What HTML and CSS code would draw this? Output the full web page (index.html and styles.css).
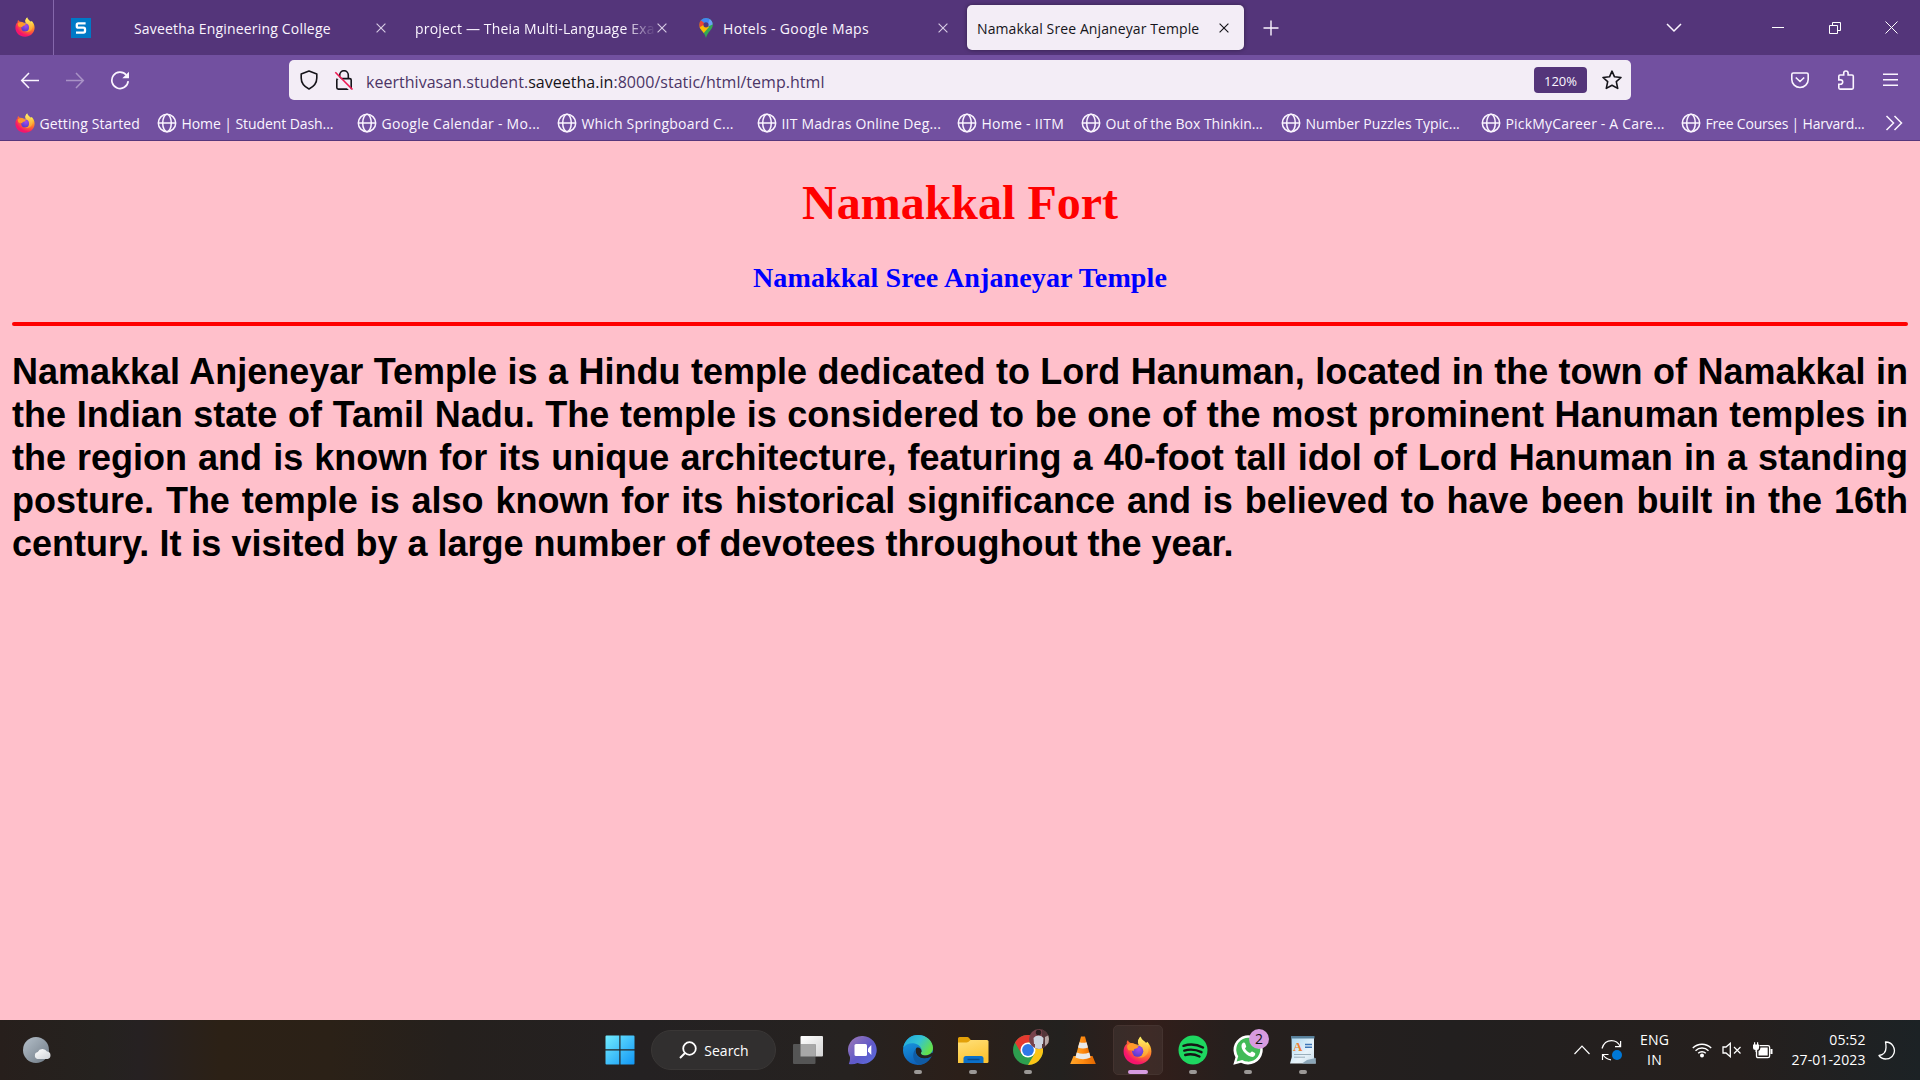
FILE: index.html
```html
<!DOCTYPE html>
<html lang="en">
<head>
<meta charset="utf-8">
<title>Namakkal Sree Anjaneyar Temple</title>
<link rel="stylesheet" href="styles.css">
</head>
<body>
<svg class="defs" width="0" height="0">
  <defs>
    <radialGradient id="ffBody" cx="0.78" cy="0.12" r="1">
      <stop offset="0.1" stop-color="#fff44f"/><stop offset="0.35" stop-color="#ffb02e"/><stop offset="0.6" stop-color="#ff6a30"/><stop offset="0.85" stop-color="#f5156c"/>
    </radialGradient>
    <linearGradient id="ffFlame" x1="0" y1="0" x2="0" y2="1"><stop offset="0" stop-color="#fff26a"/><stop offset="1" stop-color="#ff9a2b"/></linearGradient>
    <radialGradient id="ffGlobe" cx="0.6" cy="0.3" r="0.8"><stop offset="0" stop-color="#a44bf0"/><stop offset="1" stop-color="#4a3ac8"/></radialGradient>
    <linearGradient id="winG" gradientUnits="userSpaceOnUse" x1="0" y1="0" x2="30" y2="30"><stop offset="0" stop-color="#74edff"/><stop offset="1" stop-color="#0f95f5"/></linearGradient>
    <linearGradient id="tvFront" x1="0" y1="0" x2="1" y2="1"><stop offset="0" stop-color="#fff"/><stop offset="1" stop-color="#d4d4d4"/></linearGradient>
    <linearGradient id="teams" x1="0" y1="0" x2="1" y2="1"><stop offset="0" stop-color="#a07ab5"/><stop offset="0.55" stop-color="#5f59c9"/><stop offset="1" stop-color="#5b6fe0"/></linearGradient>
    <linearGradient id="edgeTop" x1="0" y1="0" x2="1" y2="0.5"><stop offset="0" stop-color="#1fa6dc"/><stop offset="0.55" stop-color="#34c3d4"/><stop offset="1" stop-color="#63e04c"/></linearGradient>
    <linearGradient id="edgeLow" x1="0" y1="0" x2="0.4" y2="1"><stop offset="0" stop-color="#1ba4e8"/><stop offset="1" stop-color="#0d5fb8"/></linearGradient>
    <linearGradient id="folder" x1="0" y1="0" x2="0.4" y2="1"><stop offset="0" stop-color="#ffe07a"/><stop offset="1" stop-color="#fcc433"/></linearGradient>
    <linearGradient id="moonG" x1="0" y1="0" x2="1" y2="1"><stop offset="0" stop-color="#b5c0ca"/><stop offset="1" stop-color="#6f7a85"/></linearGradient>
    <linearGradient id="cloudG" x1="0" y1="0" x2="1" y2="1"><stop offset="0" stop-color="#fff"/><stop offset="1" stop-color="#cfd3d8"/></linearGradient>
    <linearGradient id="vlcG" x1="0" y1="0" x2="1" y2="0"><stop offset="0" stop-color="#ffa62b"/><stop offset="0.5" stop-color="#ff8a10"/><stop offset="1" stop-color="#e06600"/></linearGradient>
    <linearGradient id="docG" x1="0" y1="0" x2="1" y2="1"><stop offset="0" stop-color="#a8d8f2"/><stop offset="0.6" stop-color="#e8f3fa"/><stop offset="1" stop-color="#c5dbe8"/></linearGradient>
    <symbol id="firefox" viewBox="0 0 30 30">
      <path fill="url(#ffBody)" d="M4 8C3.500 6.500 4.200 5 5.200 4.500C5.600 6 6.500 6.800 8 7.200C9.600 7 11 7.500 12.300 8.300L17 9.500L15.500 5.200L17.500 1C19.500 4 22 5 23.800 7.200L25.200 6C27.800 9 29.400 12 29.400 16C29.400 23.500 23 29.500 15 29.500C7 29.500 .6 23.500 .6 16C.6 12.500 1.600 10 4 8Z"/>
      <path fill="url(#ffFlame)" d="M18.500 .5C15.600 2.700 14.700 6 16 9C18 9.700 20.500 12 20.500 15.500C20.500 19 18.500 21.500 15.500 22C21 23.500 26 19.500 26.300 14.500C26.600 10 24.500 7.800 21.500 5.500C19.500 4 18.800 2.500 18.500 .5Z"/>
      <circle cx="15.200" cy="15.700" r="5.800" fill="url(#ffGlobe)"/>
      <path fill="#ff9a2b" d="M4.500 9.500C8 6.800 11 7.800 12.800 9.300L16 10.500C15.800 12 14 13 12.500 13.300C11.500 13.500 11 14.500 11 15.700C9 14.500 8 14.500 6 15C4.500 13.500 4 11.500 4.500 9.500Z"/>
    </symbol>
    <symbol id="globe" viewBox="0 0 20 20">
      <g fill="none" stroke="#fbf5ff" stroke-width="1.500"><circle cx="10" cy="10" r="8.700"/><ellipse cx="10" cy="10" rx="4.300" ry="8.700"/><path d="M1.300 10H18.700"/></g>
    </symbol>
    <symbol id="x" viewBox="0 0 10 10"><path d="M.6 .6L9.400 9.400M9.400 .6L.6 9.400" fill="none" stroke="currentColor" stroke-width="1.150"/></symbol>
  </defs>
</svg>

<header class="browser">
  <div class="tabbar">
    <div class="view-button"><svg width="20" height="20"><use href="#firefox"/></svg></div>
    <div class="pinned-tab">
      <svg width="20" height="20" viewBox="0 0 20 20"><rect width="20" height="20" fill="#0079c6"/><path d="M14.600 5.300H7.300Q5.800 5.300 5.800 6.800V8.200Q5.800 9.700 7.300 9.700H12.500Q14 9.700 14 11.200V13Q14 14.600 12.500 14.600H5" fill="none" stroke="#fff" stroke-width="2.300"/></svg>
    </div>
    <div class="tab"><span class="tab-title wide-2">Saveetha Engineering College</span><svg class="close" width="10" height="10"><use href="#x"/></svg></div>
    <div class="tab"><span class="tab-title wide-2 faded">project — Theia Multi-Language Exa</span><svg class="close" width="10" height="10"><use href="#x"/></svg></div>
    <div class="tab">
      <svg class="favicon" width="20" height="20" viewBox="0 0 20 20"><clipPath id="pin"><path d="M10 0A6.800 6.800 0 0 1 16.800 6.800C16.800 12 11.800 13 10 20C8.200 13 3.200 12 3.200 6.800A6.800 6.800 0 0 1 10 0Z"/></clipPath><g clip-path="url(#pin)"><rect width="20" height="20" fill="#34a853"/><path d="M0 0H20V3L10 7Z" fill="#4285f4"/><path d="M14 0H20V5L11 9Z" fill="#6ba1f5"/><path d="M0 0L4 1.500L10 6.500L5 12L0 9Z" fill="#ea4335"/><path d="M9 6L13 9L6 17L2 10.500Z" fill="#fbbc04"/></g><circle cx="10" cy="6.800" r="2.600" fill="#54357a"/></svg>
      <span class="tab-title wide-4">Hotels - Google Maps</span><svg class="close" width="10" height="10"><use href="#x"/></svg></div>
    <div class="tab active"><span class="tab-title wide-1">Namakkal Sree Anjaneyar Temple</span><svg class="close" width="10" height="10"><use href="#x"/></svg></div>
    <svg class="new-tab" width="16" height="16" viewBox="0 0 16 16"><path d="M8 .5V15.500M.5 8H15.500" stroke="#fbf5ff" stroke-width="1.400"/></svg>
    <div class="window-controls">
      <svg width="16" height="10" viewBox="0 0 16 10"><path d="M1 1L8 8L15 1" fill="none" stroke="#fbf5ff" stroke-width="1.500"/></svg>
      <svg class="minimize" width="12" height="12" viewBox="0 0 12 12"><path d="M0 5.500H12" stroke="#fff"/></svg>
      <svg class="restore" width="12" height="12" viewBox="0 0 12 12"><path d="M.5 3.500H8.500V11.500H.5ZM3.500 3.500V.5H11.500V8.500H8.500" fill="none" stroke="#fff"/></svg>
      <svg class="quit" width="13" height="13" viewBox="0 0 13 13"><path d="M.5 .5L12.500 12.500M12.500 .5L.5 12.500" stroke="#fff"/></svg>
    </div>
  </div>

  <div class="navbar">
    <div class="nav-buttons">
      <svg width="20" height="20" viewBox="0 0 20 20"><path d="M19 10.500H2M9 3L1.700 10.500L9 18" fill="none" stroke="#fbf5ff" stroke-width="1.500"/></svg>
      <svg class="dim" width="20" height="20" viewBox="0 0 20 20"><path d="M1 10.500H18M11 3L18.300 10.500L11 18" fill="none" stroke="#fbf5ff" stroke-width="1.500"/></svg>
      <svg width="20" height="20" viewBox="0 0 20 20"><path d="M16.300 5A8.200 8.200 0 1 0 18.200 11.200" fill="none" stroke="#fbf5ff" stroke-width="1.700"/><path d="M19 1.800V8.300H12.300Z" fill="#fbf5ff"/></svg>
    </div>
    <div class="urlbar">
      <svg class="shield" width="20" height="20" viewBox="0 0 20 20"><path d="M10 1L17.800 4V8C17.800 13 15 16.500 10 19C5 16.500 2.200 13 2.200 8V4Z" fill="none" stroke="#15141a" stroke-width="1.600" stroke-linejoin="round"/></svg>
      <svg class="lock" width="20" height="20" viewBox="0 0 20 20"><path d="M5.700 8.600V5A4.300 4.300 0 0 1 14.300 5V8.600M4.300 8.600H15.700Q17.200 8.600 17.200 10.100V17.600Q17.200 19.100 15.700 19.100H4.300Q2.800 19.100 2.800 17.600V10.100Q2.800 8.600 4.300 8.600" fill="none" stroke="#15141a" stroke-width="1.600"/><path d="M0 3.600L16.500 20" stroke="#f3edf6" stroke-width="2.400"/><path d="M1.300 2.300L18.500 19.500" stroke="#ee1850" stroke-width="1.600"/></svg>
      <span class="url">keerthivasan.student.<b>saveetha.in</b>:8000/static/html/temp.html</span>
      <span class="zoom">120%</span>
      <svg class="star" width="20" height="20" viewBox="0 0 20 20"><path d="M10 1.200L12.500 6.800L19 7.500L14.300 11.700L15.700 18.400L10 15.200L4.300 18.400L5.700 11.700L1 7.500L7.500 6.800Z" fill="none" stroke="#15141a" stroke-width="1.600" stroke-linejoin="round"/></svg>
    </div>
    <div class="nav-tools">
      <svg width="20" height="20" viewBox="0 0 20 20"><path d="M3.300 3H16.700Q18.200 3 18.200 4.500V9.500A8.200 8 0 0 1 1.800 9.500V4.500Q1.800 3 3.300 3ZM5.800 7.500L10 11.500L14.200 7.500" fill="none" stroke="#fbf5ff" stroke-width="1.600"/></svg>
      <svg width="20" height="20" viewBox="0 0 20 20"><path d="M2.800 6.200Q2.800 5 4 5H7.700V3.200A2.200 2.200 0 0 1 12.100 3.200V5H16Q17.300 5 17.300 6.300V17.800Q17.300 19.100 16 19.100H4Q2.800 19.100 2.800 17.800V14.300H4.500A2.200 2.200 0 0 0 4.500 9.900H2.800Z" fill="none" stroke="#fbf5ff" stroke-width="1.600"/></svg>
      <svg width="20" height="20" viewBox="0 0 20 20"><path d="M2 4.300H17M2 9.800H17M2 15.300H17" stroke="#fbf5ff" stroke-width="1.400"/></svg>
    </div>
  </div>

  <nav class="bookmarks">
    <a class="first wide-1"><svg width="20" height="20"><use href="#firefox"/></svg>Getting Started</a>
    <a class="narrow-1"><svg width="20" height="20"><use href="#globe"/></svg>Home | Student Dash...</a>
    <a class="wide-3"><svg width="20" height="20"><use href="#globe"/></svg>Google Calendar - Mo...</a>
    <a class="wide-2"><svg width="20" height="20"><use href="#globe"/></svg>Which Springboard C...</a>
    <a class="wide-2"><svg width="20" height="20"><use href="#globe"/></svg>IIT Madras Online Deg...</a>
    <a class="short wide-3"><svg width="20" height="20"><use href="#globe"/></svg>Home - IITM</a>
    <a class="wide-0"><svg width="20" height="20"><use href="#globe"/></svg>Out of the Box Thinkin...</a>
    <a class="wide-0"><svg width="20" height="20"><use href="#globe"/></svg>Number Puzzles Typic...</a>
    <a class="wide-2"><svg width="20" height="20"><use href="#globe"/></svg>PickMyCareer - A Care...</a>
    <a class="narrow-2"><svg width="20" height="20"><use href="#globe"/></svg>Free Courses | Harvard...</a>
    <svg class="more" width="18" height="16" viewBox="0 0 18 16"><path d="M1.500 1L8.500 8L1.500 15M9.500 1L16.500 8L9.500 15" fill="none" stroke="#fbf5ff" stroke-width="1.500"/></svg>
  </nav>
</header>

<main class="page">
  <h1>Namakkal Fort</h1>
  <h3>Namakkal Sree Anjaneyar Temple</h3>
  <hr>
  <p>Namakkal Anjeneyar Temple is a Hindu temple dedicated to Lord Hanuman, located in the town of Namakkal in the Indian state of Tamil Nadu. The temple is considered to be one of the most prominent Hanuman temples in the region and is known for its unique architecture, featuring a 40-foot tall idol of Lord Hanuman in a standing posture. The temple is also known for its historical significance and is believed to have been built in the 16th century. It is visited by a large number of devotees throughout the year.</p>
</main>

<footer class="taskbar">
  <div class="weather"><svg width="30" height="28" viewBox="0 0 30 28"><circle cx="14" cy="14" r="13" fill="url(#moonG)"/><path d="M15.500 23A3.600 3.600 0 0 1 15.800 16A5.200 5.200 0 0 1 25 15.500A3.800 3.800 0 0 1 25.500 23Z" fill="url(#cloudG)"/></svg></div>
  <div class="apps">
    <div class="app"><svg width="30" height="30" viewBox="0 0 30 30"><path fill="url(#winG)" d="M1.500 .5H14.300V14.300H.5V1.500Q.5 .5 1.500 .5ZM15.500 .5H28.500Q29.500 .5 29.500 1.500V14.300H15.500ZM.5 15.500H14.300V29.500H1.500Q.5 29.500 .5 28.500ZM15.500 15.500H29.500V28.500Q29.500 29.500 28.500 29.500H15.500Z"/></svg></div>
    <div class="search"><svg width="18" height="18" viewBox="0 0 18 18"><circle cx="10.500" cy="7.500" r="6.300" fill="none" stroke="#fff" stroke-width="1.800"/><path d="M6 12L1 17" stroke="#fff" stroke-width="1.900"/></svg>Search</div>
    <div class="app"><svg width="30" height="30" viewBox="0 0 30 30"><rect x="7.500" y="1" width="22.500" height="20.500" rx="1" fill="url(#tvFront)"/><rect x="0" y="9" width="22.500" height="20" rx="1" fill="#555"/><rect x="7.500" y="9" width="15" height="12.500" fill="#a8a8a8"/></svg></div>
    <div class="app"><svg width="30" height="30" viewBox="0 0 30 30"><path fill="url(#teams)" d="M15 1A14 14 0 1 1 9.500 28Q5 30 .8 29Q2.300 26 2 22A14 14 0 0 1 15 1Z"/><rect x="6.500" y="9" width="12.500" height="12" rx="1.500" fill="#fff"/><path d="M20 13.500L23.300 10V20L20 16.500Z" fill="#fff"/></svg></div>
    <div class="app running"><svg width="30" height="30" viewBox="0 0 30 30"><circle cx="15" cy="15" r="15" fill="url(#edgeLow)"/><path d="M.3 12.500C2 4.500 8 0 15 0C24 0 30 6.500 30 13C30 18 26 20.500 22 20.500C18.500 20.500 17 19 18 17.500C19.500 15 18 11.500 14.500 9.500C10 7 3.500 8 .3 12.500Z" fill="url(#edgeTop)"/><path d="M18.500 17C17 18.500 18.500 20.500 22 20.500C25 20.500 28 19 29 17.500L31 19L28 22C23 24.500 17 23.500 14.500 20.500C12 17.500 12 14 14 12.500C17 12 19 14.500 18.500 17Z" fill="#25221f"/><path d="M13 13.500C12 17 12.500 21 17 23C21 24.500 25 23.500 28 21.500C26 26 22 29 17 30C10 27 8 19 13 13.500Z" fill="#105ba4"/></svg></div>
    <div class="app running"><svg width="32" height="30" viewBox="0 0 32 30"><path d="M1 3.500Q1 2 2.500 2H10Q11 2 12 3L14 5.500H1Z" fill="#e3a008"/><path d="M1 8.500V5H30Q31.500 5 31.500 6.500V26.500Q31.500 28 30 28H1Z" fill="url(#folder)"/><path d="M1 3.500V7.500H9.500Q11 7.500 13.500 5L11 2.300Z" fill="#e3a008"/><path d="M6.500 28V23.500Q6.500 21 9 21H24Q26.500 21 26.500 23.500V28Z" fill="#0b70c9"/><path d="M10.500 24.500H22.500" stroke="#0a4a89" stroke-width="1.500"/></svg></div>
    <div class="app running">
      <svg width="30" height="30" viewBox="0 0 30 30"><circle cx="15" cy="15" r="15" fill="#2d9e4f"/><path d="M2 7.500A15 15 0 0 1 28 7.500H15L8.500 18.700Z" fill="#e5392f"/><path d="M28 7.500A15 15 0 0 1 15 30L21.500 18.700L15 7.500Z" fill="#fbc417"/><circle cx="15" cy="15" r="7.500" fill="#fff"/><circle cx="15" cy="15" r="5.900" fill="#2f78e8"/></svg>
      <svg class="avatar" width="20" height="20" viewBox="0 0 20 20"><clipPath id="av"><circle cx="10" cy="10" r="10"/></clipPath><g clip-path="url(#av)"><rect width="20" height="20" fill="#78424b"/><path d="M13 0H20V20H13Z" fill="#55363a"/><path d="M16 8L20 6V14L16 17Z" fill="#b9a9a6"/><circle cx="9.500" cy="3.500" r="2.700" fill="#2b1d1e"/><path d="M4.500 9Q6 6.500 9.500 6.500Q13 6.500 14.500 9L14 15H13V20H6V15H5Z" fill="#cdd3de"/></g></svg>
    </div>
    <div class="app"><svg width="30" height="30" viewBox="0 0 30 30"><path d="M5.500 21H24.500L27.800 29H2.200Z" fill="url(#vlcG)"/><path d="M13 1.500H17L23 24Q15 28 7 24Z" fill="url(#vlcG)"/><path d="M11.500 7.200Q15 8.500 18.500 7.200L20 12.500Q15 14.700 10 12.500ZM8.700 17.500Q15 20 21.300 17.500L22.600 22.500Q15 25.800 7.400 22.500Z" fill="#e9e9e9"/></svg></div>
    <div class="app focused"><svg width="29" height="29"><use href="#firefox"/></svg></div>
    <div class="app running"><svg width="30" height="30" viewBox="0 0 30 30"><circle cx="15" cy="15" r="14.500" fill="#1ed760"/><path d="M5.500 10.800Q15.500 7.500 25 12.500M6.300 15.600Q15 13 23.500 17.200M7.200 20Q14.500 18 21.500 21.500" fill="none" stroke="#151515" stroke-width="2.400" stroke-linecap="round"/></svg></div>
    <div class="app running">
      <svg width="30" height="30" viewBox="0 0 30 30"><path d="M.3 29.800L2.500 22.300A14.600 14.600 0 1 1 8 27.700Z" fill="#fff"/><path d="M3.600 26.500L5.200 21.200A12 12 0 1 1 9.200 25Z" fill="#42bb58"/><path d="M9.500 8.200C10.500 7.200 11.800 7.500 12.200 8.600L13.200 11.200C13.400 12 12.200 12.800 12 13.500C13.200 15.800 14.800 17.200 17 18C17.800 17.600 18.400 16.300 19.200 16.500L22 18C22.700 18.600 22 20.800 20.800 21.500C18.500 22.800 14.500 20.500 12 18C9.300 15.200 7.200 11 9.500 8.200Z" fill="#fff"/></svg>
      <span class="badge">2</span>
    </div>
    <div class="app running"><svg width="30" height="30" viewBox="0 0 30 30"><path d="M3.500 2H26V22L27.800 28.500H2L3.800 22Z" fill="url(#docG)"/><path d="M3 1H26.500V3.500H3Z" fill="#58809b"/><path d="M17 9.500H24M17 12.200H24" stroke="#3d76b7" stroke-width="1.400"/><path d="M6 19.500H23M6 22.200H17" stroke="#9aaebb"/><path d="M19 25L27.800 23V28.500H14Z" fill="#8ba5b7"/></svg><span class="doc-letter">A</span></div>
  </div>
  <div class="tray">
    <svg class="expand" width="16" height="10" viewBox="0 0 16 10"><path d="M.5 9L8 1.200L15.500 9" fill="none" stroke="#fff" stroke-width="1.200"/></svg>
    <svg class="sync" width="22" height="22" viewBox="0 0 22 22"><path d="M1 9.500C2.500 4.500 6 1.700 10.500 1.700C14.500 1.700 17.500 4 19.300 7.500M19.600 2V7.600H14M1.500 21V15.500H7.500M2 15.800C4 19 6.500 20.500 10 20.800" fill="none" stroke="#fff" stroke-width="1.200"/><circle cx="16" cy="16" r="5" fill="#0078d7"/></svg>
    <div class="lang"><span>ENG</span><span>IN</span></div>
    <svg class="wifi" width="20" height="16" viewBox="0 0 20 16"><path d="M.8 6A13 13 0 0 1 19.200 6M3.500 8.700A9.200 9.200 0 0 1 16.500 8.700M6.200 11.300A5.400 5.400 0 0 1 13.800 11.300" fill="none" stroke="#fff" stroke-width="1.400"/><circle cx="10" cy="13.500" r="2" fill="#fff"/></svg>
    <svg class="sound" width="20" height="16" viewBox="0 0 20 16"><path d="M1 5H4L8.300 1.300V14.700L4 11H1Z" fill="none" stroke="#fff" stroke-width="1.300"/><path d="M12 5L18.500 11.500M18.500 5L12 11.500" stroke="#fff" stroke-width="1.200"/></svg>
    <svg class="battery" width="21" height="17" viewBox="0 0 21 17"><path d="M7.500 3.700H16Q17.600 3.700 17.600 5.300V14Q17.600 15.600 16 15.600H6Q4.500 15.600 4.500 14V8" fill="none" stroke="#fff" stroke-width="1.300"/><path d="M8.500 5.600H15.700V13.600H6.500V9Q8.500 8 8.500 5.600ZM18.500 7H20.500V12H18.500ZM1 2.500H7V6Q7 8 5 8V10H3.500V8Q1 8 1 6ZM2 .3H3.200V3H2ZM5 .3H6.200V3H5Z" fill="#fff"/></svg>
    <div class="clock"><span class="time">05:52</span><span class="date">27-01-2023</span></div>
    <svg class="moon" width="18" height="19" viewBox="0 0 18 19"><path d="M7.500 1A8.500 8.500 0 1 1 1 14.500Q8 13.500 8 6.500Q8 3 7.500 1Z" fill="none" stroke="#fff" stroke-width="1.300" stroke-linejoin="round"/></svg>
  </div>
</footer>
</body>
</html>
```
FILE: styles.css
```css
* { box-sizing: border-box; }
body {
  margin: 0;
  width: 1920px;
  height: 1080px;
  overflow: hidden;
  display: flex;
  flex-direction: column;
  background: #ffc0cb;
}
svg { display: block; flex: none; }
.defs { position: absolute; }

.browser, .taskbar { font-family: "Open Sans", "Noto Sans", sans-serif; font-size: 14px; }
.browser { flex: none; height: 141px; background: #7250a0; border-bottom: 1px solid #57367c; color: #fbf5ff; }

/* Tracking steps for tab and bookmark labels */
.narrow-2 { letter-spacing: -.2px; }
.narrow-1 { letter-spacing: -.08px; }
.wide-0 { letter-spacing: 0; }
.wide-1 { letter-spacing: .1px; }
.wide-2 { letter-spacing: .18px; }
.wide-3 { letter-spacing: .28px; }
.wide-4 { letter-spacing: .36px; }

/* Tabs */
.tabbar { display: flex; align-items: center; height: 55px; background: #54357a; }
.view-button { width: 54px; height: 55px; padding: 17px 0 0 15px; border-right: 1px solid #8568ab; }
.pinned-tab { width: 68px; height: 55px; padding: 18px 0 0 17px; }
.tab { display: flex; align-items: center; width: 277px; height: 45px; margin: 0 2px; padding: 0 15.500px 0 10px; border-radius: 5px; }
.tab-title { flex: 1; min-width: 0; padding-top: 2px; white-space: nowrap; line-height: 20px; }
.faded { -webkit-mask-image: linear-gradient(to right, #000 210px, transparent 241px); mask-image: linear-gradient(to right, #000 210px, transparent 241px); }
.favicon { margin-right: 7px; }
.tab .close { color: #d7cbe4; }
.tab.active { background: #f3edf6; color: #15141a; box-shadow: 0 0 4px rgba(0, 0, 0, .4); }
.tab.active .close { color: #15141a; }
.new-tab { margin-left: 16.500px; }
.window-controls { display: flex; align-items: center; margin: 0 22px 0 auto; }
.minimize { margin-left: 90px; }
.restore { margin-left: 45px; }
.quit { margin-left: 44px; }

/* Navigation */
.navbar { display: flex; align-items: center; height: 50px; }
.nav-buttons { display: flex; gap: 25px; width: 289px; padding-left: 20px; }
.dim { opacity: .4; }
.urlbar { display: flex; align-items: center; width: 1342px; height: 40px; padding: 0 9px 0 10px; border-radius: 5px; background: #f3edf6; }
.lock { margin-left: 15px; }
.url { flex: 1; margin-left: 12px; padding-top: 3px; font-size: 16px; letter-spacing: .03px; color: #4b3566; }
.url b { font-weight: 400; color: #15141a; }
.zoom { width: 53px; height: 26px; margin-right: 15px; border-radius: 4px; background: #54357a; color: #fbf5ff; font-size: 13px; line-height: 28px; text-align: center; }
.nav-tools { display: flex; gap: 25.500px; margin-left: 159px; }

/* Bookmarks */
.bookmarks { display: flex; align-items: center; height: 35px; padding: 2px 0 0 15px; }
.bookmarks a { display: flex; align-items: center; gap: 4.500px; width: 200px; white-space: nowrap; }
.bookmarks svg { margin-top: -2px; }
.bookmarks .first { width: 142px; }
.bookmarks .short { width: 124px; }
.more { margin-left: 4px; }

/* Web page */
.page { flex: 1; padding: 0 12px; font-family: "Liberation Serif", serif; text-align: center; }
.page h1 { margin: 34px 0 0; font-size: 48px; line-height: 55px; color: #f00; }
.page h3 { margin: 32px 0 0; font-size: 28.080px; line-height: 32px; letter-spacing: .08px; color: #00f; }
.page hr { height: 4px; margin: 28px 0 0; border: 0; border-radius: 2px; background: #f00; }
.page p { margin: 24px 0 0; font: bold 36px/43px "Liberation Sans", sans-serif; text-align: justify; color: #000; }

/* Taskbar */
.taskbar {
  flex: none;
  display: flex;
  height: 60px;
  color: #fff;
  background: linear-gradient(90deg, #271f1c 0, #25221f 100px, #262122 140px, #2c2116 220px, #2b2117 330px, #25201d 450px, #242122 640px, #262220 850px, #2b1f19 960px, #23211f 1060px, #321e1a 1150px, #261f1d 1230px, #221f1f 1450px, #251f1d 1740px, #1c2225 1920px);
}
.weather { width: 592px; padding: 16px 0 0 22px; }
.apps { display: flex; align-items: center; }
.app { position: relative; display: flex; align-items: center; justify-content: center; width: 55px; height: 60px; }
.search { display: flex; align-items: center; justify-content: center; gap: 7px; width: 125px; height: 40px; margin: 0 4px; padding-left: 1px; border: 1px solid #3a3736; border-radius: 20px; background: #312f2f; }
.running::after, .focused::after { content: ""; position: absolute; bottom: 6px; left: 23.500px; width: 8px; height: 4px; border-radius: 2px; background: #9b9896; }
.focused::after { left: 17.500px; width: 20px; background: #d79be0; }
.focused::before { content: ""; position: absolute; inset: 5px 2.500px; border: 1px solid #44332f; border-radius: 5px; background: rgba(255, 255, 255, .06); }
.focused svg { position: relative; }
.avatar { position: absolute; top: 9px; left: 29px; }
.badge { position: absolute; top: 9px; left: 29px; width: 20px; height: 20px; border-radius: 50%; background: #d79be0; color: #111; line-height: 20px; text-align: center; }
.doc-letter { position: absolute; top: 19px; left: 18px; font: bold 13px/16px "Liberation Serif", serif; color: #ef8130; }
.tray { display: flex; align-items: center; margin-left: auto; padding-right: 24.500px; }
.sync { margin-left: 11px; }
.lang, .clock { display: flex; flex-direction: column; line-height: 20px; }
.lang { width: 50px; margin: 0 12px 0 7px; align-items: center; letter-spacing: .2px; }
.sound { margin-left: 10px; }
.battery { margin-left: 10px; }
.clock { width: 93px; align-items: flex-end; letter-spacing: .1px; }
.moon { margin-left: 12px; }
```
